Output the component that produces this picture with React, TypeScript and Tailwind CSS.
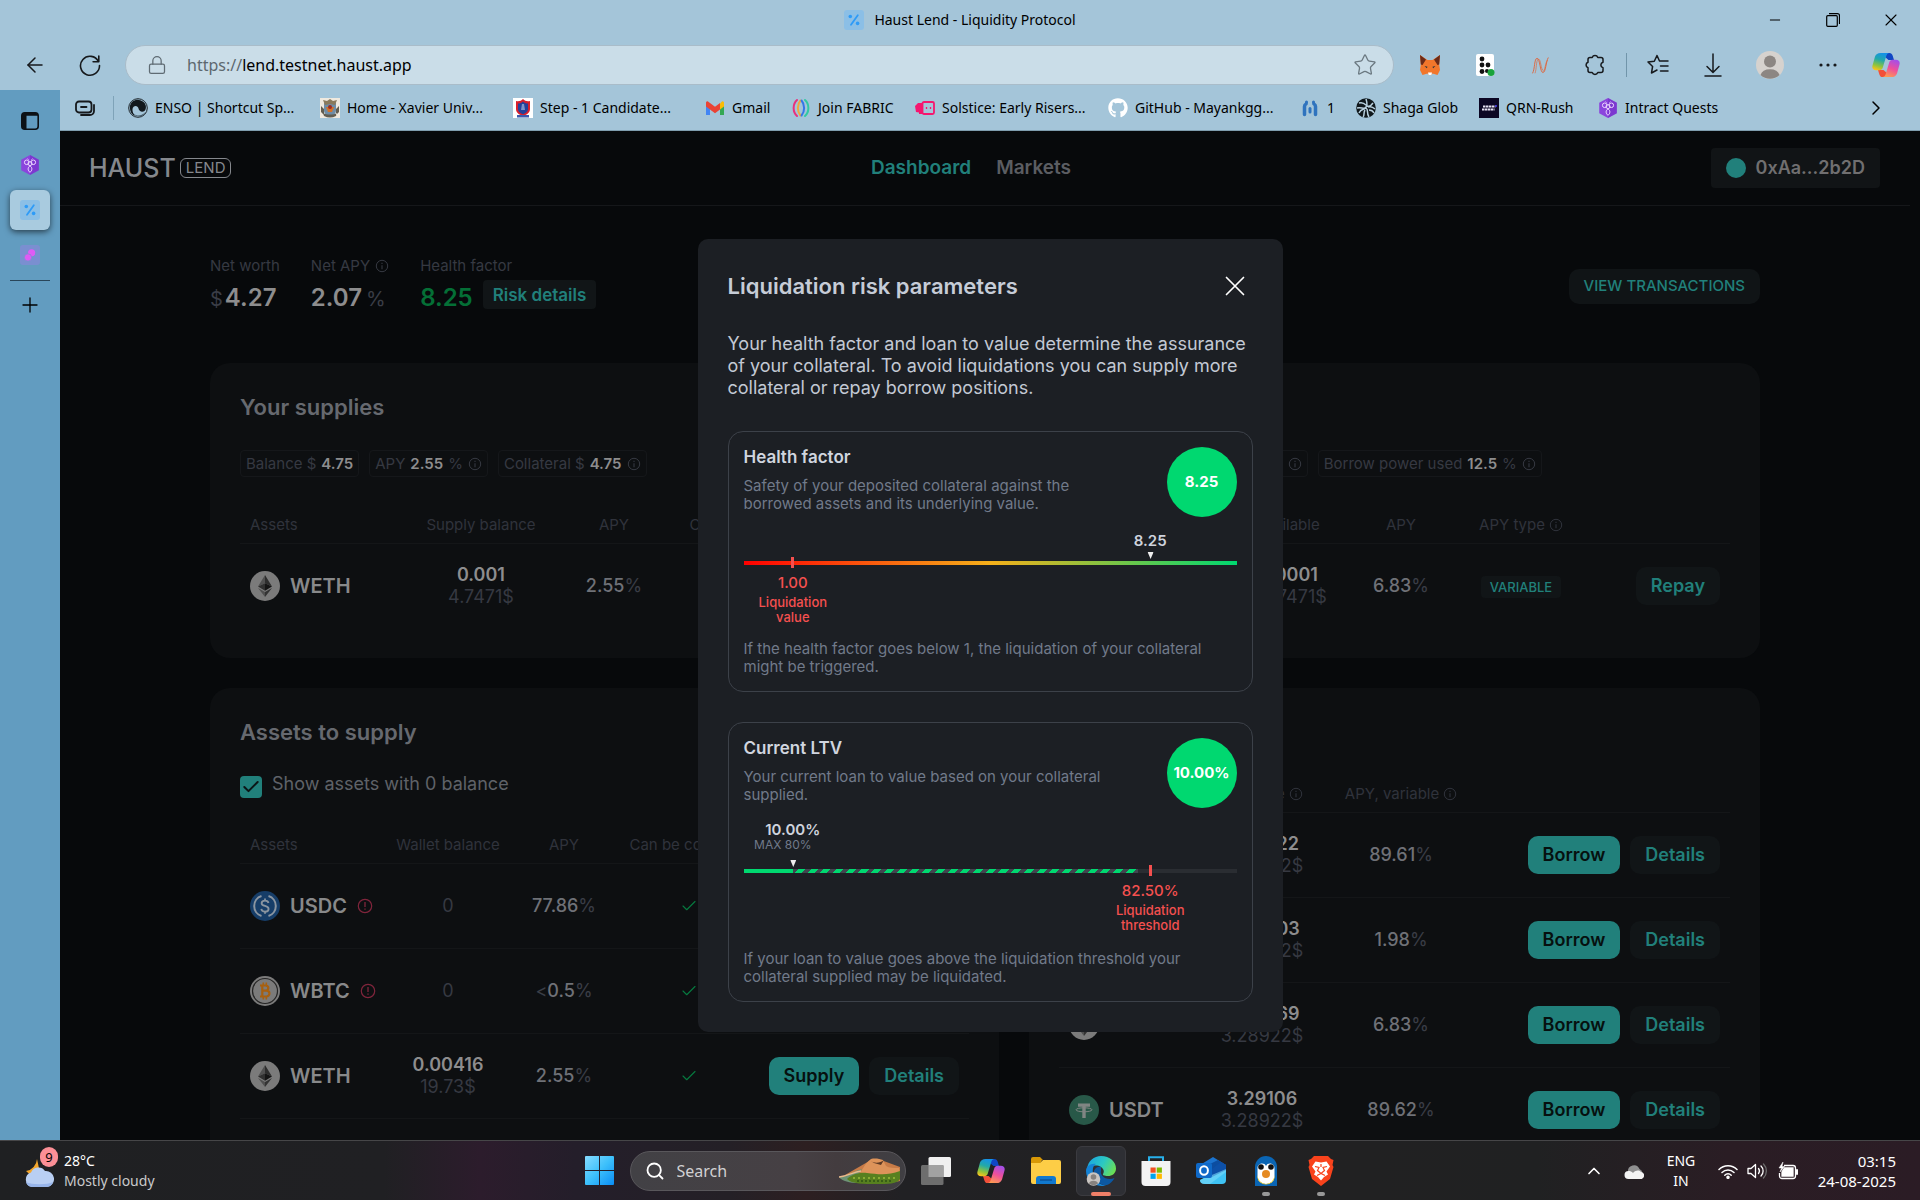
import React, { useId } from "react";
import {
  Lock,
  Star,
  ArrowLeft,
  Plus,
  X,
  ChevronRight,
  ChevronUp,
  Minus,
  Check,
  Search,
} from "lucide-react";
import { FaGithub } from "react-icons/fa";

/* ---------- small icons ---------- */

function Info({ className = "size-3.5" }: { className?: string }) {
  return (
    <svg viewBox="0 0 14 14" className={className} fill="none" stroke="currentColor" aria-hidden="true">
      <circle cx="7" cy="7" r="5.7" strokeWidth="1" />
      <path d="M7 6.2v4M7 3.7v1.2" strokeWidth="1.1" />
    </svg>
  );
}

function Alert() {
  return (
    <svg viewBox="0 0 16 16" className="size-4 text-[#80253c]" fill="none" stroke="currentColor" aria-hidden="true">
      <circle cx="8" cy="8" r="6.7" strokeWidth="1.2" />
      <path d="M8 4v5M8 10.4v1.4" strokeWidth="1.3" />
    </svg>
  );
}

function PercentLogo() {
  return (
    <svg viewBox="0 0 20 20" className="size-5" aria-hidden="true">
      <rect width="20" height="20" rx="3" fill="#8bbfe6" />
      <path d="M13.8 5.2 7 14.8" stroke="#2e9bf7" strokeWidth="1.8" strokeLinecap="round" />
      <circle cx="6.3" cy="6.5" r="1.8" fill="#2e9bf7" />
      <circle cx="13.6" cy="13.4" r="1.8" fill="#2e9bf7" />
    </svg>
  );
}

function IntractLogo() {
  return (
    <svg viewBox="0 0 20 20" className="size-5" aria-hidden="true">
      <path d="M10 0 18.8 4.8v10.4L10 20 1.2 15.2V4.8z" fill="#8b45dd" />
      <path d="M10 0 18.8 4.8v10.4L10 20z" fill="#6d2bc4" opacity=".5" />
      <g fill="none" stroke="#ecd6ff" strokeWidth="1">
        <circle cx="6.7" cy="7.3" r="2.3" />
        <circle cx="13.3" cy="7.3" r="2.3" />
        <circle cx="10" cy="8.6" r="2" />
        <path d="M10 11c-2.6 1.2-2.4 4.8 0 6.3 2.4-1.5 2.6-5.1 0-6.3zM8.4 4.6 7.5 3.6M11.6 4.6l.9-1" />
      </g>
    </svg>
  );
}

function CopilotLogo({ className }: { className: string }) {
  const id = useId();
  return (
    <svg viewBox="0 0 28 28" className={className} aria-hidden="true">
      <defs>
        <linearGradient id={id + "a"} x1="0.6" y1="0" x2="0.3" y2="1">
          <stop offset="0" stopColor="#1591e8" />
          <stop offset=".4" stopColor="#22a9a8" />
          <stop offset=".75" stopColor="#8fc43c" />
          <stop offset="1" stopColor="#f7c31c" />
        </linearGradient>
        <linearGradient id={id + "b"} x1="0.7" y1="0" x2="0.3" y2="1">
          <stop offset="0" stopColor="#a44fe8" />
          <stop offset=".5" stopColor="#ee4f9b" />
          <stop offset="1" stopColor="#fd9a52" />
        </linearGradient>
      </defs>
      <path d="M15 2h2.5c1.6 0 2.6 1 3.1 2.6L22 9h-5.5L13 6z" fill="#1046c4" />
      <path d="M13 26h-2.500c-1.600 0-2.600-1-3.100-2.600L6 19h5.500L15 22z" fill="#f2503a" />
      <path d="M8.500 2H17c-1.600.3-2.300 1.500-2.800 3.200l-3.400 11.300c-.6 1.900-1.700 2.700-3.500 2.700H4.200C1 19.200-.2 17.300.5 14.600L3 5.600C3.900 3.200 5.700 2 8.500 2z" fill={"url(#" + id + "a)"} />
      <path d="M19.500 26H11c1.600-.3 2.300-1.500 2.800-3.200l3.400-11.300c.6-1.900 1.700-2.700 3.500-2.700h3.100c3.200 0 4.400 1.900 3.700 4.600L25 22.400c-.9 2.400-2.700 3.600-5.500 3.600z" fill={"url(#" + id + "b)"} />
    </svg>
  );
}

/* ---------- browser chrome ---------- */

function TitleBar() {
  return (
    <div className="relative flex h-10 items-center justify-center">
      <div className="flex items-center gap-2.5">
        <PercentLogo />
        <span className="text-sm text-black">Haust Lend - Liquidity Protocol</span>
      </div>
      <div className="absolute right-0 top-0 flex h-10 items-center text-black">
        <button aria-label="Minimize" className="flex h-10 w-[58px] items-center justify-center">
          <Minus className="size-4" strokeWidth={1.5} />
        </button>
        <button aria-label="Restore" className="flex h-10 w-[58px] items-center justify-center">
          <svg viewBox="0 0 14 14" className="size-3.5" fill="none" stroke="currentColor">
            <rect x=".7" y="2.7" width="10.6" height="10.6" rx="1" strokeWidth="1.2" />
            <path d="M3 .7h8.500a2 2 0 0 1 2 2V11" strokeWidth="1.2" />
          </svg>
        </button>
        <button aria-label="Close" className="flex h-10 w-[58px] items-center justify-center">
          <X className="size-5" strokeWidth={1.3} />
        </button>
      </div>
    </div>
  );
}

function Toolbar() {
  return (
    <div className="flex h-[50px] items-center text-[#16191c]">
      <button aria-label="Back" className="ml-[23px] flex w-6 justify-center">
        <ArrowLeft className="size-6" strokeWidth={1.5} />
      </button>
      <button aria-label="Refresh" className="ml-[31px] flex w-6 justify-center">
        <svg viewBox="0 0 24 24" className="size-6" fill="none" stroke="currentColor" strokeWidth="1.6" strokeLinecap="round" strokeLinejoin="round">
          <path d="M20.500 8.500A9.500 9.500 0 1 0 21.500 12.500M20.800 3v5.700h-5.700" />
        </svg>
      </button>
      <div className="ml-[23px] flex h-10 flex-1 items-center rounded-full border border-[#a9bcc9] bg-[#cadde8] pl-[21px] pr-4">
        <Lock className="size-5 text-[#5f6b73]" strokeWidth={1.5} />
        <div className="ml-5 flex flex-1 items-center text-base leading-8">
          <span className="text-[#5d686f]">https://</span>
          <input aria-label="Address" defaultValue="lend.testnet.haust.app" className="h-8 min-w-0 flex-1 bg-transparent text-black outline-none" />
        </div>
        <button aria-label="Favorite"><Star className="size-6 text-[#6b7880]" strokeWidth={1.3} /></button>
      </div>
      <div className="flex items-center">
        <button aria-label="MetaMask" className="ml-6 flex w-6 justify-center">
          <svg viewBox="0 0 24 24" className="size-6">
            <path d="M2 2l7.500 5h5L22 2l-.8 9.500L22 17l-2.500 5-5-1.500-1 1.500h-3l-1-1.500-5 1.500L2 17l.8-5.500z" fill="#f2762b" />
            <path d="M2 2l6 4.500-3.500 5.500-1.700-.5zM22 2l-6 4.500 3.500 5.500 1.700-.5z" fill="#6b2a18" />
            <path d="M6.500 13l3 .8-.6 1.500zM17.500 13l-3 .8.6 1.500z" fill="#20303d" />
            <path d="M10 19.500h4l-.5 2.500h-3z" fill="#fff" />
          </svg>
        </button>
        <button aria-label="Extension" className="ml-[31px] flex w-6 justify-center">
          <svg viewBox="0 0 24 24" className="size-6">
            <rect x="3" y="1" width="18" height="22" rx="2" fill="#fff" />
            <g fill="#111">
              <circle cx="9" cy="6" r="2.400" /><circle cx="9" cy="12" r="2.400" /><circle cx="9" cy="18.500" r="2.400" /><circle cx="15" cy="12" r="2.400" /><circle cx="14" cy="18" r="2" />
            </g>
            <circle cx="18" cy="19.500" r="3.500" fill="#18a33b" />
          </svg>
        </button>
        <button aria-label="Wallet extension" className="ml-[31px] flex w-6 justify-center">
          <svg viewBox="0 0 24 24" className="size-5" fill="none" stroke="#dc6b45" strokeWidth="1.200">
            <path d="M3 22C6 17 5 4 8.500 4S12 21 15.500 21 19 8 22 3" />
            <path d="M6 22c2-5 1-15 4-17 3-1 3 13 6 14 2 1 2-9 5-13" opacity=".7" />
          </svg>
        </button>
        <button aria-label="Extensions" className="ml-[31px] flex w-6 justify-center">
          <svg viewBox="0 0 24 24" className="size-6" fill="none" stroke="currentColor" strokeWidth="1.500" strokeLinejoin="round">
            <path d="M7 4.500h2.200a3 3 0 0 1 5.600 0H18a2 2 0 0 1 2 2V9.200a2.900 2.900 0 0 0 0 5.600v2.700a2 2 0 0 1-2 2h-3.200a3 3 0 0 1-5.600 0H7a2 2 0 0 1-2-2v-2.700a3 3 0 0 1 0-5.600V6.500a2 2 0 0 1 2-2z" />
          </svg>
        </button>
        <div className="ml-[19px] h-6 w-px bg-[#7195aa]" />
        <button aria-label="Favorites" className="ml-[19px] flex w-6 justify-center">
          <svg viewBox="0 0 24 24" className="size-6" fill="none" stroke="currentColor" strokeWidth="1.500" strokeLinecap="round" strokeLinejoin="round">
            <path d="M13.500 8 11 2.500 8.300 8.200 2 9l4.600 4.500L5.500 20l5.500-3M13.500 8H22M14.500 13H22M14.500 18H22" />
          </svg>
        </button>
        <button aria-label="Downloads" className="ml-[31px] flex w-6 justify-center">
          <svg viewBox="0 0 24 24" className="size-6" fill="none" stroke="currentColor" strokeWidth="1.500" strokeLinecap="round" strokeLinejoin="round">
            <path d="M12 1v18M6 13.500l6 6 6-6M4 23h16" />
          </svg>
        </button>
        <button aria-label="Profile" className="ml-[31px] flex">
          <svg viewBox="0 0 28 28" className="size-7">
            <circle cx="14" cy="14" r="14" fill="#d6d2ce" />
            <circle cx="14" cy="10.500" r="6" fill="#8c8682" />
            <path d="M4.500 24a9.800 7.500 0 0 1 19 0A14 14 0 0 1 4.500 24z" fill="#8c8682" />
          </svg>
        </button>
        <button aria-label="More" className="ml-8 flex w-6 justify-center">
          <svg viewBox="0 0 18 4" className="h-1 w-[18px]" fill="currentColor"><circle cx="2" cy="2" r="1.600" /><circle cx="9" cy="2" r="1.600" /><circle cx="16" cy="2" r="1.600" /></svg>
        </button>
        <button aria-label="Copilot" className="ml-8 mr-5 flex"><CopilotLogo className="size-7" /></button>
      </div>
    </div>
  );
}

const bookmarks: { label: string; width: string; icon: React.ReactNode }[] = [
  {
    label: "ENSO | Shortcut Sp...",
    width: "w-48",
    icon: (
      <svg viewBox="0 0 20 20" className="size-5">
        <circle cx="10" cy="10" r="9.300" fill="none" stroke="#1c2429" strokeWidth="1" />
        <path d="M2 11C1 5 6 1 11 2c6 1 8 6 6.500 9.500C16 15 11 14 10.500 10.500 10 7 5 7 4.500 11c-.3 3 1 5 3 7C4 17 2.300 14 2 11z" fill="#11181c" />
        <path d="M5 15c4 4 9 3 12.500-1-2 5-9 6.500-12.500 1z" fill="#3f5561" />
      </svg>
    ),
  },
  {
    label: "Home - Xavier Univ...",
    width: "w-[193px]",
    icon: (
      <svg viewBox="0 0 20 20" className="size-5">
        <rect width="20" height="20" fill="#efe9df" />
        <path d="M4 5h12v7c0 4-3 6-6 7-3-1-6-3-6-7z" fill="#6f8da6" />
        <path d="M3 2l4 1 3-2 3 2 4-1-2 5-5-1-5 1z" fill="#8a7a5c" />
        <path d="M6 9h8l-2 5H8z" fill="#d3722a" />
        <circle cx="10" cy="9" r="2" fill="#9c2c25" />
        <path d="M1 8l3 3v6l-3-3zM19 8l-3 3v6l3-3zM3 15c4 2 10 2 14 0l-1 3c-4 2-8 2-12 0z" fill="#625d50" />
      </svg>
    ),
  },
  {
    label: "Step - 1 Candidate...",
    width: "w-48",
    icon: (
      <svg viewBox="0 0 20 20" className="size-5">
        <rect width="20" height="20" fill="#fff" />
        <path d="M10 1c2 2 4 2.500 7 2v8c0 4-4 6-7 7-3-1-7-3-7-7V3c3 .5 5 0 7-2z" fill="#d81f2d" />
        <path d="M10 3.500c1.500 1.500 3 2 5 2V11c0 3-3 4.500-5 5.200-2-.7-5-2.200-5-5.200V5.500c2 0 3.500-.5 5-2z" fill="#23409b" />
        <path d="M9 6h2l1 6H8z" fill="#7d93c8" />
        <path d="M4 17h12v2.500H4z" fill="#3b59ad" />
      </svg>
    ),
  },
  {
    label: "Gmail",
    width: "w-[86px]",
    icon: (
      <svg viewBox="0 0 20 20" className="size-5">
        <path d="M1 4.500V17h4V8.500z" fill="#4285f4" />
        <path d="M19 4.500V17h-4V8.500z" fill="#34a853" />
        <path d="M15 5.500 17 3.500c1-.8 2 0 2 1.500v3.500L15 11.500z" fill="#fbbc04" />
        <path d="M1 8.500V5c0-1.500 1-2.300 2-1.500l7 5.200 5-3.700v6.500l-5 3.700-5-3.700z" fill="#ea4335" />
      </svg>
    ),
  },
  {
    label: "Join FABRIC",
    width: "w-[124px]",
    icon: (
      <svg viewBox="0 0 20 20" className="size-5" fill="none" strokeWidth="2" strokeLinecap="round">
        <path d="M6 2C1.500 6 1.500 14 6 18" stroke="#e8317f" />
        <path d="M9.500 2.500c-3.500 4-3.500 11 0 15" stroke="#f2a73b" />
        <path d="M10.500 2.500c3.500 4 3.500 11 0 15" stroke="#3576e8" />
        <path d="M14 2c4.500 4 4.500 12 0 16" stroke="#31c9a3" />
      </svg>
    ),
  },
  {
    label: "Solstice: Early Risers...",
    width: "w-[193px]",
    icon: (
      <svg viewBox="0 0 20 20" className="size-5">
        <path d="M0 8l3-3h5v11H4v-1.500L1 14z" fill="#f5166f" />
        <rect x="7.500" y="4" width="11.500" height="12" rx="1.500" fill="none" stroke="#f5166f" strokeWidth="1.800" />
        <path d="M11.500 9v2M15.500 9v2" stroke="#f5166f" strokeWidth="1.300" />
      </svg>
    ),
  },
  { label: "GitHub - Mayankgg...", width: "w-[192px]", icon: <FaGithub className="size-5 text-white" /> },
  {
    label: "1",
    width: "w-14",
    icon: (
      <svg viewBox="0 0 20 20" className="size-5" fill="none" stroke="#2f73be" strokeLinecap="round">
        <path d="M4.500 16.500V8.500c0-1.500.5-2 1.500-2.500M15.500 16.500V8.500c0-1.500-.5-2-1.500-2.500" strokeWidth="3.500" />
        <path d="M6.500 4v.5M13.500 4v.5" strokeWidth="3" />
        <path d="M10 10.500v3.500" strokeWidth="3" />
      </svg>
    ),
  },
  {
    label: "Shaga Glob",
    width: "w-[123px]",
    icon: (
      <svg viewBox="0 0 20 20" className="size-5">
        <circle cx="10" cy="10" r="9.800" fill="#10181c" />
        <g fill="none" stroke="#b9d1df" strokeWidth="1.500">
          <path d="M3 5c3-1 5 0 7 2s4 2 7-2M1 10c4-1 6 1 8 0s3-3 1-9M10 10c-3 2-5 1-7 5M12 9c3-1 5 0 7 2M10 10c3 2 0 5 3 9M9 12c-2 3 0 5-2 7M13 12c3 0 4 1 5 3" />
        </g>
      </svg>
    ),
  },
  {
    label: "QRN-Rush",
    width: "w-[119px]",
    icon: (
      <svg viewBox="0 0 20 20" className="size-5">
        <rect width="20" height="20" fill="#0c0724" />
        <path d="M4 8.500h12.500M3 11.500h12.500" stroke="#e5e2f2" strokeWidth="2" strokeDasharray="2.500 .5" />
        <path d="M16 8h2" stroke="#4a3cf0" strokeWidth="1.500" />
      </svg>
    ),
  },
  { label: "Intract Quests", width: "w-[120px]", icon: <IntractLogo /> },
];

function BookmarksBar() {
  return (
    <div className="flex h-[41px] items-center border-b border-[#7f9dae] pb-1 text-black">
      <button aria-label="Collections" className="ml-[14px] flex">
        <svg viewBox="0 0 22 18" className="h-[18px] w-[22px]" fill="none" stroke="#16191c" strokeWidth="1.800" strokeLinecap="round">
          <rect x="2" y="2.500" width="15.500" height="11" rx="3" />
          <path d="M7 8h5.500M7 16h9a4 4 0 0 0 4-4V6" />
        </svg>
      </button>
      <div className="ml-[17px] mr-[14px] h-6 w-px bg-[#7fa3b8]" />
      {bookmarks.map((b) => (
        <a key={b.label} href="#" className={"flex shrink-0 items-center gap-[7px] whitespace-nowrap text-sm " + b.width}>
          <span className="shrink-0">{b.icon}</span>
          {b.label}
        </a>
      ))}
      <button aria-label="More bookmarks" className="ml-auto mr-8 flex">
        <ChevronRight className="size-6" strokeWidth={1.500} />
      </button>
    </div>
  );
}

function SideTabs() {
  return (
    <aside className="flex w-[60px] shrink-0 flex-col items-center bg-[#629cc0]">
      <button aria-label="Tab actions" className="mt-[21px] flex">
        <svg viewBox="0 0 20 20" className="size-5">
          <rect x="1.800" y="1.800" width="16.400" height="16.400" rx="3" fill="none" stroke="#0c1115" strokeWidth="1.600" />
          <path d="M2 4.500C2 3 3 2 4.500 2H6.500v16H4.500C3 18 2 17 2 15.500zM2 4q0-2 2-2h12q2 0 2 2v.8H2z" fill="#0c1115" />
        </svg>
      </button>
      <button aria-label="Intract" className="mt-6 flex"><IntractLogo /></button>
      <button aria-label="Haust Lend" className="mt-[15px] flex size-10 items-center justify-center rounded-md bg-[#a9cbdf] shadow-[0_2px_6px_rgba(0,0,0,0.6)]">
        <PercentLogo />
      </button>
      <button aria-label="Swap" className="mt-[15px] flex">
        <svg viewBox="0 0 20 20" className="size-5">
          <rect width="20" height="20" rx="3" fill="#7a8fd0" />
          <circle cx="11.600" cy="7.800" r="3.600" fill="#e05bf5" />
          <circle cx="8" cy="12.400" r="3.600" fill="#e05bf5" stroke="#7a8fd0" strokeWidth=".7" />
        </svg>
      </button>
      <div className="mt-[15px] h-px w-10 bg-[#29465a]" />
      <button aria-label="New tab" className="mt-3 flex"><Plus className="size-6 text-black" strokeWidth={1.300} /></button>
    </aside>
  );
}

/* ---------- tokens ---------- */

function Token({ symbol }: { symbol: string }) {
  switch (symbol) {
    case "WETH":
      return (
        <span className="flex size-[30px] items-center justify-center rounded-full bg-[#7b7b7b]">
          <svg viewBox="0 0 14 22" className="h-[22px] w-3.5">
            <path d="M7 0 0 11.500 7 8.300z" fill="#505050" />
            <path d="M7 0l7 11.500L7 8.300z" fill="#2d2d2d" />
            <path d="M0 11.500 7 8.300v7.400z" fill="#303030" />
            <path d="M14 11.500 7 8.300v7.400z" fill="#151515" />
            <path d="M0 13l7 4.100V22z" fill="#505050" />
            <path d="M14 13l-7 4.100V22z" fill="#333" />
          </svg>
        </span>
      );
    case "USDC":
      return (
        <svg viewBox="0 0 30 30" className="size-[30px]">
          <circle cx="15" cy="15" r="15" fill="#163d68" />
          <g fill="none" stroke="#8b95a0" strokeWidth="2">
            <path d="M11.500 5a10.500 10.500 0 0 0 0 20M18.500 5a10.500 10.500 0 0 1 0 20" />
            <path d="M18.500 12c-.3-1.600-1.600-2.400-3.500-2.400-2.100 0-3.400 1-3.400 2.600 0 3.800 7 1.700 7 5.700 0 1.700-1.400 2.700-3.600 2.700-2.100 0-3.500-1-3.700-2.700M15 7.500v2.300M15 20.500v2.300" strokeWidth="1.800" />
          </g>
        </svg>
      );
    case "WBTC":
      return (
        <svg viewBox="0 0 30 30" className="size-[30px]">
          <circle cx="15" cy="15" r="15" fill="#7b7b7b" />
          <circle cx="15" cy="15" r="12.500" fill="none" stroke="#242424" strokeWidth="1.200" />
          <g fill="none" stroke="#a8600f" strokeWidth="2.200">
            <path d="M10 9.500h5.500c3.800 0 3.800 5.200 0 5.200H12M12 14.700h4.300c4.200 0 4.200 5.800 0 5.800H10M12.300 9v12" />
            <path d="M13.300 6.500v3M16.300 6.500v3M13.300 20.500v3M16.300 20.500v3" strokeWidth="1.600" />
          </g>
        </svg>
      );
    default:
      return (
        <svg viewBox="0 0 30 30" className="size-[30px]">
          <circle cx="15" cy="15" r="15" fill="#285848" />
          <path d="M9 8.500h12v3.200h-4.300V23h-3.400V11.700H9z" fill="#808583" />
          <ellipse cx="15" cy="14.800" rx="8" ry="2" fill="none" stroke="#808583" strokeWidth="1" />
        </svg>
      );
  }
}

/* ---------- dashboard pieces ---------- */

function Percent({ value, less = false }: { value: string; less?: boolean }) {
  return (
    <span className="text-lg font-medium text-[#6f7177]">
      {less && <span className="font-normal text-[#3a3d46]">&lt;</span>}
      {value}
      <span className="font-normal text-[#3a3d46]">%</span>
    </span>
  );
}

function Amount({ value, usd }: { value: string; usd: string }) {
  return (
    <div className="flex flex-col text-lg leading-[22px]">
      <span className="font-semibold text-[#8d8d8e]">{value}</span>
      <span className="text-[#363942]">{usd}</span>
    </div>
  );
}

function Pill({ label, value, before, after, info = false }: { label: string; value: string; before?: string; after?: string; info?: boolean }) {
  return (
    <div className="flex h-[27px] items-center gap-[5px] whitespace-nowrap rounded border border-[#15171a] px-[5px] text-[15px] leading-[27px] text-[#363942]">
      <span>{label}{before ? " " + before : ""}</span>
      <span className="font-semibold text-[#8d8d8e]">{value}</span>
      {after && <span>{after}</span>}
      {info && <Info />}
    </div>
  );
}

function Card({ title, children }: { title: string; children: React.ReactNode }) {
  return (
    <section className="min-w-0 rounded-[20px] bg-[#0d0f11] p-[30px]">
      <h2 className="text-[22px] font-semibold leading-7 text-[#66696f]">{title}</h2>
      {children}
    </section>
  );
}

type Column = { label: string; width: string; info?: boolean };

function DataTable({ columns, rows }: { columns: Column[]; rows: React.ReactNode[][] }) {
  return (
    <table className="w-full table-fixed border-collapse">
      <colgroup>
        {columns.map((c, i) => (
          <col key={i} className={c.width} />
        ))}
      </colgroup>
      <thead>
        <tr className="h-[37px] border-b border-[#141618]">
          {columns.map((c, i) => (
            <th key={i} scope="col" className="whitespace-nowrap p-0 pt-0.5 text-center text-[15px] font-normal text-[#30333c] first:pl-2.5 first:text-left">
              <span className="inline-flex items-center gap-1">
                {c.label}
                {c.info && <Info />}
              </span>
            </th>
          ))}
        </tr>
      </thead>
      <tbody>
        {rows.map((r, i) => (
          <tr key={i} className="h-[85px] border-b border-[#141618] last:border-0">
            {r.map((cell, j) => (
              <td key={j} className="p-0 text-center first:pl-2.5 last:pr-2.5">{cell}</td>
            ))}
          </tr>
        ))}
      </tbody>
    </table>
  );
}

function Asset({ symbol, alert = false }: { symbol: string; alert?: boolean }) {
  return (
    <div className="flex items-center gap-2.5 text-xl font-semibold text-[#88898a]">
      <Token symbol={symbol} />
      <span>{symbol}</span>
      {alert && <Alert />}
    </div>
  );
}

function Primary({ children }: { children: string }) {
  return <button className="h-[38px] rounded-[10px] bg-[#21807b] px-[15px] text-lg font-semibold text-[#06100f]">{children}</button>;
}

function Secondary({ children }: { children: string }) {
  return <button className="h-[38px] rounded-[10px] bg-[#111517] px-[15px] text-lg font-semibold text-[#21807b]">{children}</button>;
}

function Actions({ primary }: { primary: string }) {
  return (
    <div className="flex justify-end gap-2.5">
      <Primary>{primary}</Primary>
      <Secondary>Details</Secondary>
    </div>
  );
}

function Tick() {
  return <Check className="mx-auto size-[18px] text-[#067a40]" strokeWidth={1.500} />;
}

function Header() {
  return (
    <header className="flex h-[75px] items-center justify-between border-b border-[#15171a] pl-[29px] pr-[30px]">
      <a href="#" className="flex items-center gap-1 text-[#85888d]">
        <span className="text-[25px] font-medium leading-7">HAUST</span>
        <span className="flex h-5 items-center rounded-md border border-[#85888d] px-[5px] text-[15px] leading-5">LEND</span>
      </a>
      <nav className="flex gap-[25px] text-[19px] font-semibold">
        <a href="#" className="text-[#21807b]">Dashboard</a>
        <a href="#" className="text-[#5b5d62]">Markets</a>
      </nav>
      <button className="flex h-10 items-center gap-2.5 rounded bg-[#111416] px-[15px] text-lg font-semibold text-[#706f70]">
        <span className="size-5 rounded-full bg-[#21807b]" />
        0xAa...2b2D
      </button>
    </header>
  );
}

function StatLabel({ children }: { children: React.ReactNode }) {
  return <dt className="mb-1 flex items-center gap-[5px] text-[15px] font-normal leading-5 text-[#363942]">{children}</dt>;
}

function Stats() {
  return (
    <div className="flex items-center justify-between">
      <dl className="flex gap-[31px] text-2xl font-semibold leading-9 text-[#8d8d8e]">
        <div>
          <StatLabel>Net worth</StatLabel>
          <dd><span className="mr-0.5 text-xl font-normal text-[#3a3d46]">$</span>4.27</dd>
        </div>
        <div>
          <StatLabel>Net APY <Info /></StatLabel>
          <dd>2.07<span className="ml-1 text-xl font-normal text-[#3a3d46]">%</span></dd>
        </div>
        <div>
          <StatLabel>Health factor</StatLabel>
          <dd className="flex items-start gap-2.5 text-[#046f36]">
            8.25
            <button className="h-[29px] rounded bg-[#111517] px-2.5 text-[17px] leading-5 text-[#21807b]">Risk details</button>
          </dd>
        </div>
      </dl>
      <button className="h-[35px] rounded-[10px] bg-[#101416] px-[15px] text-[15px] font-medium text-[#21807b]">VIEW TRANSACTIONS</button>
    </div>
  );
}

function Dashboard() {
  return (
    <div className="pr-2.5">
      <Header />
      <main className="mx-auto max-w-[1550px] pt-[50px]">
        <Stats />
        <div className="mt-[47px] grid grid-cols-[789fr_731fr] items-start gap-[30px]">
          <Card title="Your supplies">
            <div className="my-[29px] flex gap-2.5">
              <Pill label="Balance" before="$" value="4.75" />
              <Pill label="APY" value="2.55" after="%" info />
              <Pill label="Collateral" before="$" value="4.75" info />
            </div>
            <DataTable
              columns={[
                { label: "Assets", width: "w-[169px]" },
                { label: "Supply balance", width: "w-[144px]" },
                { label: "APY", width: "w-[122px]" },
                { label: "Collateral", width: "w-24" },
                { label: "", width: "w-[198px]" },
              ]}
              rows={[[<Asset symbol="WETH" />, <Amount value="0.001" usd="4.7471$" />, <Percent value="2.55" />, null, null]]}
            />
          </Card>
          <Card title="Your borrows">
            <div className="my-[29px] flex gap-2.5">
              <Pill label="Balance" before="$" value="0.47" />
              <Pill label="APY" value="6.83" after="%" info />
              <Pill label="Borrow power used" value="12.5" after="%" info />
            </div>
            <DataTable
              columns={[
                { label: "Assets", width: "w-[166px]" },
                { label: "Available", width: "w-[126px]" },
                { label: "APY", width: "w-[100px]" },
                { label: "APY type", width: "w-[140px]", info: true },
                { label: "", width: "w-[139px]" },
              ]}
              rows={[
                [
                  <Asset symbol="WETH" />,
                  <Amount value="0.0001" usd="0.47471$" />,
                  <Percent value="6.83" />,
                  <span className="inline-flex h-[22px] items-center rounded bg-[#111517] px-[9px] text-[13px] font-medium leading-[22px] text-[#21807b]">VARIABLE</span>,
                  <div className="flex justify-end"><Secondary>Repay</Secondary></div>,
                ],
              ]}
            />
          </Card>
          <Card title="Assets to supply">
            <div className="mb-7 mt-[30px] flex items-start gap-2.5">
              <span className="relative flex size-[22px]">
                <input id="zero" type="checkbox" defaultChecked className="size-[22px] appearance-none rounded-sm bg-[#21807b]" />
                <Check className="pointer-events-none absolute inset-0 m-auto size-5 text-[#0b1516]" strokeWidth={2.400} />
              </span>
              <label htmlFor="zero" className="text-lg leading-4 text-[#5f6268]">Show assets with 0 balance</label>
            </div>
            <DataTable
              columns={[
                { label: "Assets", width: "w-[140px]" },
                { label: "Wallet balance", width: "w-[136px]" },
                { label: "APY", width: "w-24" },
                { label: "Can be collateral", width: "w-[154px]" },
                { label: "", width: "w-[203px]" },
              ]}
              rows={[
                [<Asset symbol="USDC" alert />, <span className="text-lg text-[#363942]">0</span>, <Percent value="77.86" />, <Tick />, null],
                [<Asset symbol="WBTC" alert />, <span className="text-lg text-[#363942]">0</span>, <Percent value="0.5" less />, <Tick />, null],
                [<Asset symbol="WETH" />, <Amount value="0.00416" usd="19.73$" />, <Percent value="2.55" />, <Tick />, <Actions primary="Supply" />],
                [null, null, null, null, null],
              ]}
            />
          </Card>
          <Card title="Assets to borrow">
            <div className="mt-[29px]">
              <DataTable
                columns={[
                  { label: "Assets", width: "w-[142px]" },
                  { label: "Available", width: "w-[122px]", info: true },
                  { label: "APY, variable", width: "w-[156px]", info: true },
                  { label: "", width: "w-[251px]" },
                ]}
                rows={[
                  [<Asset symbol="USDC" />, <Amount value="3.29022" usd="3.28922$" />, <Percent value="89.61" />, <Actions primary="Borrow" />],
                  [<Asset symbol="WBTC" />, <Amount value="0.00003" usd="3.28922$" />, <Percent value="1.98" />, <Actions primary="Borrow" />],
                  [<Asset symbol="WETH" />, <Amount value="0.00069" usd="3.28922$" />, <Percent value="6.83" />, <Actions primary="Borrow" />],
                  [<Asset symbol="USDT" />, <Amount value="3.29106" usd="3.28922$" />, <Percent value="89.62" />, <Actions primary="Borrow" />],
                ]}
              />
            </div>
          </Card>
        </div>
      </main>
    </div>
  );
}

/* ---------- dialog ---------- */

function RiskCard({ title, text, badge, note, children }: { title: string; text: string; badge: string; note: string; children: React.ReactNode }) {
  return (
    <section className="rounded-[15px] border border-[#3c4149] p-[15px] text-[15px] leading-[18px] text-[#717a8a]">
      <div className="flex h-[70px] items-start justify-between">
        <div className="max-w-[390px]">
          <h3 className="mb-2.5 text-[17px] font-semibold leading-5 text-[#d0d5df]">{title}</h3>
          <p>{text}</p>
        </div>
        <span className="flex size-[70px] shrink-0 items-center justify-center rounded-full bg-[#00d870] text-[15px] font-bold text-white">{badge}</span>
      </div>
      {children}
      <p>{note}</p>
    </section>
  );
}

function Pointer({ at, value, max }: { at: string; value: string; max?: string }) {
  return (
    <div className="absolute bottom-full mb-0.5 flex -translate-x-1/2 flex-col items-center" style={{ left: at }}>
      <span className="text-[15px] font-semibold text-[#ced3dd]">{value}</span>
      {max && <span className="mr-5 whitespace-nowrap text-xs leading-3">{max}</span>}
      <svg viewBox="0 0 6 7" className={max ? "mt-[9px] h-[7px] w-1.5" : "mt-0.5 h-[7px] w-1.5"}><path d="M0 0h6L3 7z" fill="#eee" /></svg>
    </div>
  );
}

function Limit({ at, value, label }: { at: string; value: string; label: string }) {
  return (
    <div className="absolute -top-1 flex w-20 -translate-x-1/2 flex-col items-center text-center text-[#f4504f]" style={{ left: at }}>
      <span className="h-[11px] w-[3px] bg-[#f4504f]" />
      <span className="mt-1.5 text-[15px] font-medium">{value}</span>
      <span className="mt-[3px] text-[13px] font-medium leading-[15px]">{label}</span>
    </div>
  );
}

function RiskDialog() {
  return (
    <div className="absolute inset-0 flex items-center justify-center">
      <div role="dialog" aria-labelledby="risk-title" className="w-[585px] rounded-[10px] bg-[#1c1f24] p-[30px]">
        <div className="flex items-center justify-between leading-[34px]">
          <h2 id="risk-title" className="text-[22px] font-semibold text-[#c6ccd7]">Liquidation risk parameters</h2>
          <button aria-label="Close" className="mr-2 flex">
            <svg viewBox="0 0 20 20" className="size-5" stroke="#fff" strokeWidth="1.700" strokeLinecap="round"><path d="M1.500 1.500l17 17M18.500 1.500l-17 17" /></svg>
          </button>
        </div>
        <p className="mb-8 mt-[30px] text-lg leading-[22px] text-[#c3c9d4]">
          Your health factor and loan to value determine the assurance of your collateral. To avoid liquidations you can supply more collateral or repay borrow positions.
        </p>
        <div className="flex flex-col gap-[30px]">
          <RiskCard
            title="Health factor"
            text="Safety of your deposited collateral against the borrowed assets and its underlying value."
            badge="8.25"
            note="If the health factor goes below 1, the liquidation of your collateral might be triggered."
          >
            <div className="relative mb-[75px] mt-11 h-1 bg-[linear-gradient(90deg,#ff0000_0%,#f5b01a_50%,#00d870_100%)]">
              <Pointer at="82.5%" value="8.25" />
              <Limit at="10%" value="1.00" label="Liquidation value" />
            </div>
          </RiskCard>
          <RiskCard
            title="Current LTV"
            text="Your current loan to value based on your collateral supplied."
            badge="10.00%"
            note="If your loan to value goes above the liquidation threshold your collateral supplied may be liquidated."
          >
            <div className="relative mb-[77px] mt-[61px] flex h-1 bg-[#2a2d32]">
              <div className="w-[10%] bg-[#00d870]" />
              <div className="w-[70%] bg-[repeating-linear-gradient(-45deg,#414650_0px,#414650_4px,#00d870_4px,#00d870_9px)]" />
              <Pointer at="10%" value="10.00%" max="MAX 80%" />
              <Limit at="82.5%" value="82.50%" label="Liquidation threshold" />
            </div>
          </RiskCard>
        </div>
      </div>
    </div>
  );
}

/* ---------- taskbar ---------- */

function Tile({ label, active = false, running = false, children }: { label: string; active?: boolean; running?: boolean; children: React.ReactNode }) {
  return (
    <button
      aria-label={label}
      className={"relative flex size-[50px] items-center justify-center rounded-md " + (active ? "border border-[#3b3b40] bg-[#2e2f34]" : "")}
    >
      {children}
      {active && <span className="absolute -bottom-px left-1/2 h-1 w-5 -translate-x-1/2 rounded-full bg-[#f07f68]" />}
      {running && <span className="absolute bottom-0 left-1/2 h-1 w-2 -translate-x-1/2 rounded-full bg-[#989898]" />}
    </button>
  );
}

function Taskbar() {
  return (
    <footer className="grid h-[60px] shrink-0 grid-cols-[1fr_auto_1fr] items-center border-t border-[#464648] bg-[linear-gradient(90deg,#1f2022_0%,#202023_20%,#2c1c2c_25%,#241e2a_30%,#242026_38%,#2d1f21_42%,#212124_47%,#222122_62%,#202122_80%,#2a1d24_90%,#2b1c25_100%)] text-sm text-white">
      <button className="flex items-center gap-2.5 pl-6 text-left leading-5">
        <span className="relative">
          <svg viewBox="0 0 30 36" className="h-9 w-[30px]">
            <path d="M13 6a13 13 0 0 1-11 12 10 10 0 0 0 14 2z" fill="#f3a62c" />
            <path d="M8 34a7.500 7.500 0 0 1-1-14.500 8 8 0 0 1 14-1.500A8 8 0 0 1 23 34z" fill="#b9cff3" />
            <path d="M2 29a7 7 0 0 0 6 5h15a7 7 0 0 0 6-5c-6 3-21 3-27 0z" fill="#98b5ea" />
          </svg>
          <span className="absolute -right-1 -top-1.5 flex h-5 w-[18px] items-center justify-center rounded-full bg-[#fb8f96] text-[13px] leading-5 text-black">9</span>
        </span>
        <span>28°C<br /><span className="text-[#c9c9cb]">Mostly cloudy</span></span>
      </button>
      <div className="flex items-center gap-[5px]">
        <Tile label="Start">
          <svg viewBox="0 0 30 30" className="size-[29px]">
            <defs>
              <linearGradient id="win" x1="0" y1="0" x2="1" y2="1"><stop offset="0" stopColor="#87dcff" /><stop offset=".5" stopColor="#3dc0fb" /><stop offset="1" stopColor="#0a8df5" /></linearGradient>
            </defs>
            <path d="M0 1q0-1 1-1h13.500v14.500H0zM15.500 0H29q1 0 1 1v13.500H15.500zM0 15.500h14.500V30H1q-1 0-1-1zM15.500 15.500H30V29q0 1-1 1H15.500z" fill="url(#win)" />
          </svg>
        </Tile>
        <label className="flex h-10 w-[276px] items-center overflow-hidden rounded-full border border-[#59575b] bg-[linear-gradient(90deg,#424145_0%,#464044_60%,#433c3f_75%,#403f43_100%)] pl-3.5 pr-1">
          <Search className="size-5 shrink-0" strokeWidth={2.200} />
          <input placeholder="Search" aria-label="Search" className="ml-3 h-8 min-w-0 flex-1 bg-transparent text-base outline-none placeholder:text-[#d2d1d3]" />
          <svg viewBox="0 0 62 26" className="h-[26px] w-[62px] shrink-0">
            <path d="M6 17 32 2l10 0L61 9v14l-10 2-30-1z" fill="#c77b47" />
            <path d="M32 1c4-1 9 0 12 1l3 6c3 2 8 2 13 2l1 7H20c3-4 5-11 12-16z" fill="#dd935a" />
            <path d="M30 2c4 3 10 4 15 0l-3 5-7-2z" fill="#5e3a25" />
            <path d="M0 19c8-1 15-6 23-8-3 5-8 8-4 14C11 25 3 23 0 19z" fill="#6d9275" />
            <path d="M8 21c5-5 13-7 20-6 10 1 20 3 33-2v8c-3 5-12 5-24 5s-24 0-29-5z" fill="#57801f" />
            <path d="M0 19c9-1 14-5 22-6" stroke="#e9b98c" strokeWidth="1.500" fill="none" />
            <path d="M14 20h44" stroke="#89ac33" strokeWidth="2" strokeDasharray="2 3" />
            <path d="M18 23h36" stroke="#375d16" strokeWidth="2" strokeDasharray="2 2" />
          </svg>
        </label>
        <Tile label="Task view">
          <svg viewBox="0 0 30 28" className="h-7 w-[30px]"><rect x="7.500" y="0" width="22.500" height="20" rx="1.500" fill="#f0f0f0" /><rect x="0" y="8" width="22.500" height="20" rx="1.500" fill="#6e6e6e" /><path d="M7.500 8h15v12h-15z" fill="#a2a2a2" /></svg>
        </Tile>
        <Tile label="Copilot"><CopilotLogo className="size-7" /></Tile>
        <Tile label="File Explorer">
          <svg viewBox="0 0 30 27" className="h-[27px] w-[30px]">
            <path d="M0 2q0-2 2-2h7l3 3h-1l-2 4H0z" fill="#d89806" />
            <path d="M0 6h9l3-3h16q2 0 2 2v20q0 2-2 2H2q-2 0-2-2z" fill="#fdcd46" />
            <path d="M5 27v-5q0-3 3-3h14q3 0 3 3v5z" fill="#1179cf" />
            <path d="M9 23h12" stroke="#0a4d91" strokeWidth="1.300" />
          </svg>
        </Tile>
        <Tile label="Edge" active>
          <svg viewBox="0 0 30 30" className="size-[30px]">
            <defs>
              <linearGradient id="edge1" x1="0" y1=".3" x2="1" y2=".7"><stop offset="0" stopColor="#1ba7e0" /><stop offset=".5" stopColor="#2cc8c2" /><stop offset="1" stopColor="#6fe04e" /></linearGradient>
            </defs>
            <path d="M1 13C2 5 8 0 15 0c9 0 15 6 15 12.500 0 5-4 7.500-8 7.500s-5.500-1-5-2c1.500-2 1-5-2-7C11 8.500 4 9.500 1 13z" fill="url(#edge1)" />
            <path d="M0 15c0-5 5-8 10-7-2 1-4 4-3 9 1 7 6 12 13 12.500C10 32 0 25 0 15z" fill="#1482d6" />
            <path d="M15 11c-5-1-8 3-7 8 1 6 7 11 13 10 3-1 6-4 7.500-7-4 2-10 1-12-2-1.500-2-2-3-1.500-5z" fill="#0c58a2" />
            <circle cx="7.500" cy="23" r="6.800" fill="#c9c5c2" /><circle cx="7.500" cy="21" r="2.800" fill="#87827f" /><path d="M3 27.500a4.600 3.600 0 0 1 9 0 7 7 0 0 1-9 0z" fill="#87827f" />
          </svg>
        </Tile>
        <Tile label="Store">
          <svg viewBox="0 0 30 30" className="size-[30px]">
            <path d="M8 6V1.300h14V6" fill="none" stroke="#27b0ea" strokeWidth="2" />
            <path d="M.5 5h29v21q0 4-4 4h-21q-4 0-4-4z" fill="#f3f3f3" />
            <path d="M9.500 11.500h5.200v5.200H9.500z" fill="#f25022" /><path d="M15.700 11.500h5.200v5.200h-5.200z" fill="#7fba00" /><path d="M9.500 17.700h5.200v5.200H9.500z" fill="#00a4ef" /><path d="M15.700 17.700h5.200v5.200h-5.200z" fill="#ffb900" />
          </svg>
        </Tile>
        <Tile label="Outlook">
          <svg viewBox="0 0 30 27" className="h-[27px] w-[30px]">
            <path d="M4 8 17 0l13 8v6L10 22z" fill="#1b73ce" />
            <path d="M8 10 22 3l8 5-18 13z" fill="#0c4da0" />
            <path d="M30 9v14q0 4-4 4H9q-5 0-5-4z" fill="#3fc3f4" />
            <path d="M30 8v5L16 20v-8l9-7z" fill="#0d50a8" />
            <path d="M4 23 30 12v3L14 27H9q-5 0-5-4z" fill="#7ad9f8" opacity=".6" />
            <rect x="0" y="6" width="16" height="15" rx="2" fill="#0f69c8" />
            <ellipse cx="8" cy="13.500" rx="3.900" ry="4.300" fill="none" stroke="#fff" strokeWidth="2" />
          </svg>
        </Tile>
        <Tile label="Duo" running>
          <svg viewBox="0 0 22 30" className="h-[30px] w-[22px]">
            <path d="M0 11a11 11 0 0 1 22 0v19H0z" fill="#0a65b4" />
            <path d="M2.500 12c0-5 7-6 8.500-2 1.500-4 8.500-3 8.500 2v9a8.500 7 0 0 1-17 0z" fill="#fff" />
            <path d="M2.500 19a8.500 9 0 0 0 17 0v2a8.500 7.500 0 0 1-17 0z" fill="#f5d020" />
            <circle cx="6" cy="11" r="2.800" fill="#111" /><circle cx="16" cy="11" r="2.800" fill="#111" /><circle cx="11" cy="18" r="4" fill="#e58a22" />
          </svg>
        </Tile>
        <Tile label="Brave" running>
          <svg viewBox="0 0 26 30" className="h-[30px] w-[26px]">
            <path d="M6 0h14l3 3 2.500 1-1 5 1 2-3.500 12L13 30 4 23 .5 11l1-2-1-5L3 3z" fill="#f9431c" />
            <path d="M7.500 5.500 13 6.500l5.500-1L22 10.500l-3.500 5 1.500 3-4 2.500-3 3.500-3-3.500-4-2.500 1.500-3L4 10.500z" fill="#fff" />
            <path d="M7 10.500l4 1-1.500 3 3.500 3 3.500-3-1.500-3 4-1M9 19.500l4-2 4 2M13 11v-3" stroke="#f9431c" strokeWidth="1.200" fill="none" />
          </svg>
        </Tile>
      </div>
      <div className="flex items-center justify-end pr-6">
        <button aria-label="Hidden icons" className="flex"><ChevronUp className="size-5" strokeWidth={2} /></button>
        <svg viewBox="0 0 20 16" className="ml-5 h-4 w-5" aria-hidden="true">
          <path d="M4 9a6 6 0 0 1 11.500-3A5 5 0 0 1 16 15z" fill="#8f8f90" />
          <path d="M4.500 16a4 4 0 0 1 0-8c2 0 3 .5 4.500 2 3-3 6-3 8-1 5 1 3.500 7-.5 7z" fill="#f3f3f3" />
        </svg>
        <button className="ml-[22px] w-[30px] text-center leading-5">ENG<br />IN</button>
        <svg viewBox="0 0 20 16" className="ml-[22px] h-4 w-5" fill="none" stroke="#fff" strokeWidth="1.500" strokeLinecap="round" aria-hidden="true">
          <path d="M1 6.500a12.500 12.500 0 0 1 18 0M4 9.500a8.500 8.500 0 0 1 12 0M6.800 12.200a4.500 4.500 0 0 1 6.400 0" /><circle cx="10" cy="14.300" r="1" fill="#fff" />
        </svg>
        <svg viewBox="0 0 20 18" className="ml-[9px] h-[18px] w-5" fill="none" stroke="#fff" strokeWidth="1.300" strokeLinecap="round" strokeLinejoin="round" aria-hidden="true">
          <path d="M1 6.500v5h3l4.500 4V2.500L4 6.500zM11.500 6.500a4 4 0 0 1 0 5M14 4a7 7 0 0 1 0 10" /><path d="M16.500 2a10 10 0 0 1 0 14" stroke="#6c6c6c" />
        </svg>
        <svg viewBox="0 0 20 20" className="ml-[11px] size-5" fill="none" stroke="#fff" strokeWidth="1.300" aria-hidden="true">
          <path d="M6 4.500h9a2.500 2.500 0 0 1 2.500 2.500v8a2.500 2.500 0 0 1-2.500 2.500H4A2.500 2.500 0 0 1 1.500 15v-3" />
          <path d="M6.500 7H15v8H4v-4zM18 9h1.500v4H18z" fill="#fff" />
          <path d="M5 1 1 7h2.500L2 11l4.500-5.500H4z" fill="#fff" strokeWidth=".5" />
        </svg>
        <button className="ml-[18px] w-20 whitespace-nowrap text-right text-[15px] leading-5">03:15<br />24-08-2025</button>
      </div>
    </footer>
  );
}

export default function App() {
  return (
    <div className="flex h-screen flex-col overflow-hidden bg-[#a4c5d9] font-['Noto_Sans','Open_Sans',sans-serif]">
      <TitleBar />
      <Toolbar />
      <div className="flex min-h-0 flex-1">
        <SideTabs />
        <div className="flex min-w-0 flex-1 flex-col">
          <BookmarksBar />
          <div className="relative min-h-0 flex-1 overflow-hidden bg-[#07090b] font-['Inter',sans-serif]">
            <Dashboard />
            <RiskDialog />
          </div>
        </div>
      </div>
      <Taskbar />
    </div>
  );
}
